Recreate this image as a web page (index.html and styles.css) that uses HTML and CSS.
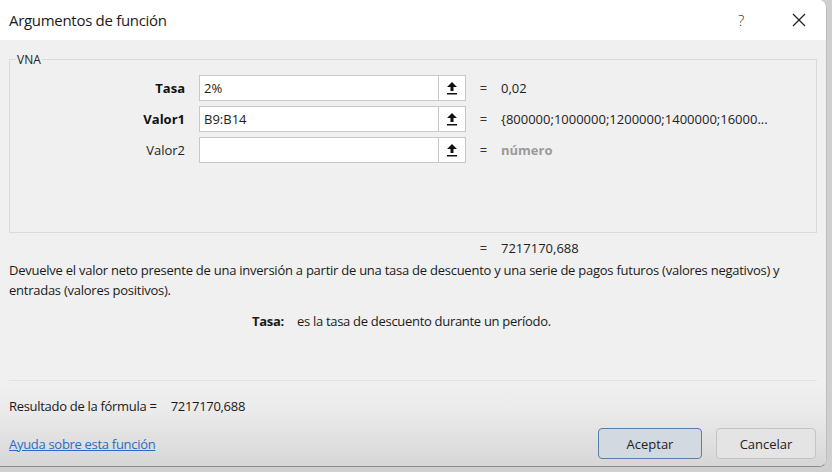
FILE: index.html
```html
<!DOCTYPE html>
<html lang="es">
<head>
<meta charset="utf-8">
<link rel="stylesheet" href="styles.css">
</head>
<body>
<div class="dialog">
  <div class="titlebar">
    <span class="title">Argumentos de función</span>
    <span class="help">?</span>
    <span class="close"><svg width="14" height="14" viewBox="0 0 14 14"><path d="M1 1 L13 13 M13 1 L1 13" stroke="#222" stroke-width="1.3" fill="none"/></svg></span>
  </div>
  <div class="body">
    <fieldset class="group">
      <legend>VNA</legend>
      <div class="args">
        <div class="arg">
          <label class="lbl bold">Tasa</label>
          <div class="field"><span class="input">2%</span><span class="pick"><svg width="12" height="14" viewBox="0 0 12 14"><path d="M6 1 L11 6 H7.5 V10 H4.5 V6 H1 Z" fill="#111"/><rect x="1" y="12" width="10" height="1.5" fill="#111"/></svg></span></div>
          <span class="eq">=</span>
          <span class="val">0,02</span>
        </div>
        <div class="arg">
          <label class="lbl bold">Valor1</label>
          <div class="field"><span class="input">B9:B14</span><span class="pick"><svg width="12" height="14" viewBox="0 0 12 14"><path d="M6 1 L11 6 H7.5 V10 H4.5 V6 H1 Z" fill="#111"/><rect x="1" y="12" width="10" height="1.5" fill="#111"/></svg></span></div>
          <span class="eq">=</span>
          <span class="val">{800000;1000000;1200000;1400000;16000...</span>
        </div>
        <div class="arg">
          <label class="lbl">Valor2</label>
          <div class="field"><span class="input"></span><span class="pick"><svg width="12" height="14" viewBox="0 0 12 14"><path d="M6 1 L11 6 H7.5 V10 H4.5 V6 H1 Z" fill="#111"/><rect x="1" y="12" width="10" height="1.5" fill="#111"/></svg></span></div>
          <span class="eq">=</span>
          <span class="val muted">número</span>
        </div>
      </div>
    </fieldset>
    <div class="result-row">
      <span class="eq">=</span>
      <span class="val">7217170,688</span>
    </div>
    <p class="desc">Devuelve el valor neto presente de una inversión a partir de una tasa de descuento y una serie de pagos futuros (valores negativos) y entradas (valores positivos).</p>
    <p class="argdesc"><b>Tasa:</b><span>es la tasa de descuento durante un período.</span></p>
  </div>
  <div class="footer">
    <div class="formula">Resultado de la fórmula =<span>7217170,688</span></div>
    <div class="actions">
      <a class="link" href="#">Ayuda sobre esta función</a>
      <div class="buttons">
        <button class="btn primary">Aceptar</button>
        <button class="btn">Cancelar</button>
      </div>
    </div>
  </div>
</div>
</body>
</html>
```
FILE: styles.css
```css
* { box-sizing: border-box; }
html, body { margin: 0; padding: 0; }
body {
  width: 832px;
  height: 472px;
  background: #cfcfcf;
  font-family: "Open Sans", "Noto Sans", sans-serif;
  color: #1a1a1a;
  overflow: hidden;
}
.dialog {
  width: 827px;
  height: 467px;
  background: #f0f0f0;
  border-radius: 0 8px 8px 0;
  border-right: 1px solid #bdbdbd;
  border-bottom: 1px solid #8a8a8a;
  overflow: hidden;
  display: flex;
  flex-direction: column;
}
.titlebar {
  height: 40px;
  background: #fff;
  display: flex;
  align-items: center;
  padding-left: 9px;
  flex: none;
}
.title {
  font-size: 15px;
  letter-spacing: -0.3px;
  color: #1a1a1a;
  flex: 1;
}
.help {
  font-size: 15px;
  font-weight: 300;
  width: 20px;
  color: #333;
  margin-right: 34px;
}
.close {
  width: 14px;
  height: 14px;
  margin-right: 20px;
  display: flex;
}
.body {
  padding: 0 9px;
  flex: none;
}
.group {
  margin: 11px 0 0 0;
  padding: 0;
  border: 1px solid #dadada;
  height: 182px;
  min-width: 0;
}
.group legend {
  font-size: 12px;
  padding: 0 1px;
  margin-left: 6px;
  color: #222;
}
.args {
  display: flex;
  flex-direction: column;
  gap: 5px;
  margin-top: 7px;
}
.arg {
  display: flex;
  align-items: center;
  height: 26px;
}
.lbl {
  width: 175px;
  text-align: right;
  font-size: 13px;
  color: #222;
  margin-right: 14px;
}
.lbl.bold { font-weight: 700; color: #111; }
.field {
  display: flex;
  height: 26px;
  width: 267px;
}
.input {
  width: 240px;
  height: 26px;
  background: #fff;
  border: 1px solid #c8c8c8;
  font-size: 13px;
  padding-left: 4px;
  line-height: 24px;
  color: #222;
}
.pick {
  width: 27px;
  height: 26px;
  background: #fff;
  border: 1px solid #c8c8c8;
  border-left: none;
  display: flex;
  align-items: center;
  justify-content: center;
}
.eq {
  width: 35px;
  text-align: center;
  font-size: 13px;
  color: #333;
}
.val {
  font-size: 13px;
  color: #222;
}
.val.muted { color: #9a9a9a; font-weight: 700; }
.result-row {
  display: flex;
  align-items: center;
  height: 24px;
  padding-left: 457px;
  margin-top: 3px;
}
.desc {
  margin: 0;
  font-size: 13px;
  line-height: 20px;
  letter-spacing: -0.25px;
  color: #1a1a1a;
}
.argdesc {
  margin: 12px 0 0 0;
  font-size: 13px;
  letter-spacing: -0.3px;
  padding-left: 243px;
  display: flex;
}
.argdesc b { width: 45px; }
.footer {
  flex: 1;
  margin-top: 50px;
  padding: 0 9px;
  background: linear-gradient(#f0f0f0 0px, #ebebeb 30px, #d6d6d6 87px);
  display: flex;
  flex-direction: column;
}
.formula {
  border-top: 1px solid #e2e2e2;
  padding-top: 16px;
  font-size: 13px;
  letter-spacing: -0.3px;
  height: 48px;
}
.formula span { margin-left: 14px; }
.actions {
  display: flex;
  align-items: center;
  justify-content: space-between;
}
.link {
  font-size: 13px;
  letter-spacing: -0.3px;
  color: #2a6cc8;
  text-decoration: underline;
}
.buttons {
  display: flex;
  gap: 14px;
  margin-right: 1px;
}
.btn {
  font-family: inherit;
  font-size: 13px;
  width: 100px;
  height: 31px;
  border: 1px solid #c4c4c4;
  border-radius: 4px;
  background: #e4e4e4;
  color: #222;
}
.btn.primary {
  width: 104px;
  border: 1px solid #5a7ea8;
  background: #d3d9e0;
}
```
